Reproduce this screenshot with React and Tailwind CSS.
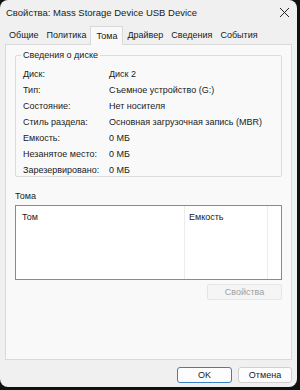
import React from 'react';

const tabs = ['Общие', 'Политика', 'Тома', 'Драйвер', 'Сведения', 'События'];

const rows = [
  ['Диск:', 'Диск 2'],
  ['Тип:', 'Съемное устройство (G:)'],
  ['Состояние:', 'Нет носителя'],
  ['Стиль раздела:', 'Основная загрузочная запись (MBR)'],
  ['Емкость:', '0 МБ'],
  ['Незанятое место:', '0 МБ'],
  ['Зарезервировано:', '0 МБ'],
];

const App = () => {
  return (
    <div className="w-[300px] h-[390px] bg-[#111111] font-['Liberation_Sans',Arial,sans-serif] text-[#1a1a1a]">
      <div className="w-[297px] h-[387px] bg-[#f0f0f0] rounded-lg flex flex-col overflow-hidden">
        {/* title bar */}
        <div className="h-[25px] flex items-center justify-between pl-[6px] pr-[7px]">
          <span className="text-[9.5px] leading-none">Свойства: Mass Storage Device USB Device</span>
          <svg width="11" height="11" viewBox="0 0 11 11" fill="none" stroke="#222" strokeWidth="1">
            <path d="M1 1l9 9M10 1l-9 9" />
          </svg>
        </div>

        {/* tabs */}
        <div className="h-[19px] flex items-end pl-[5px] text-[9px] leading-none">
          {tabs.map((t) =>
            t === 'Тома' ? (
              <div
                key={t}
                className="h-[19px] px-[5px] pt-[5px] bg-[#f9f9f9] border border-b-0 border-[#d9d9d9] relative top-[1px] z-10"
              >
                {t}
              </div>
            ) : (
              <div key={t} className="h-[17px] px-[4px] pt-[4px]">
                {t}
              </div>
            )
          )}
        </div>

        {/* panel */}
        <div className="mx-[5px] h-[316px] bg-[#f9f9f9] border border-[#d9d9d9] px-[9px] pt-[6px] flex flex-col text-[9px]">
          <fieldset className="border border-[#dcdcdc] rounded-[2px] px-[7px] pb-[4px] h-[126px]">
            <legend className="px-[2px] ml-[-2px] leading-none">Сведения о диске</legend>
            <div className="flex flex-col pt-[6px]">
              {rows.map(([k, v]) => (
                <div key={k} className="flex h-[16px] items-center leading-none">
                  <span className="w-[86px] shrink-0">{k}</span>
                  <span className="whitespace-nowrap">{v}</span>
                </div>
              ))}
            </div>
          </fieldset>

          <div className="mt-[15px] leading-none">Тома</div>
          <div className="mt-[4px] h-[75px] bg-white border border-[#8a8a8a] flex">
            <div className="w-[169px] border-r border-[#ececec] pl-[6px] pt-[7px] leading-none">Том</div>
            <div className="w-[83px] border-r border-[#ececec] pl-[4px] pt-[7px] leading-none">Емкость</div>
          </div>

          <div className="mt-[4px] flex justify-end">
            <div className="w-[75px] h-[16px] border border-[#e5e5e5] bg-[#f5f5f5] rounded-[2px] flex items-center justify-center text-[#a0a0a0] leading-none">
              Свойства
            </div>
          </div>
        </div>

        {/* bottom buttons */}
        <div className="flex justify-end gap-[6px] pr-[5px] pt-[7px] text-[9px]">
          <div className="w-[55px] h-[16px] bg-[#fdfdfd] border border-[#3b7fc4] rounded-[3px] flex items-center justify-center leading-none">
            OK
          </div>
          <div className="w-[54px] h-[16px] bg-[#fdfdfd] border border-[#d0d0d0] rounded-[3px] flex items-center justify-center leading-none">
            Отмена
          </div>
        </div>
      </div>
    </div>
  );
};

export default App;
